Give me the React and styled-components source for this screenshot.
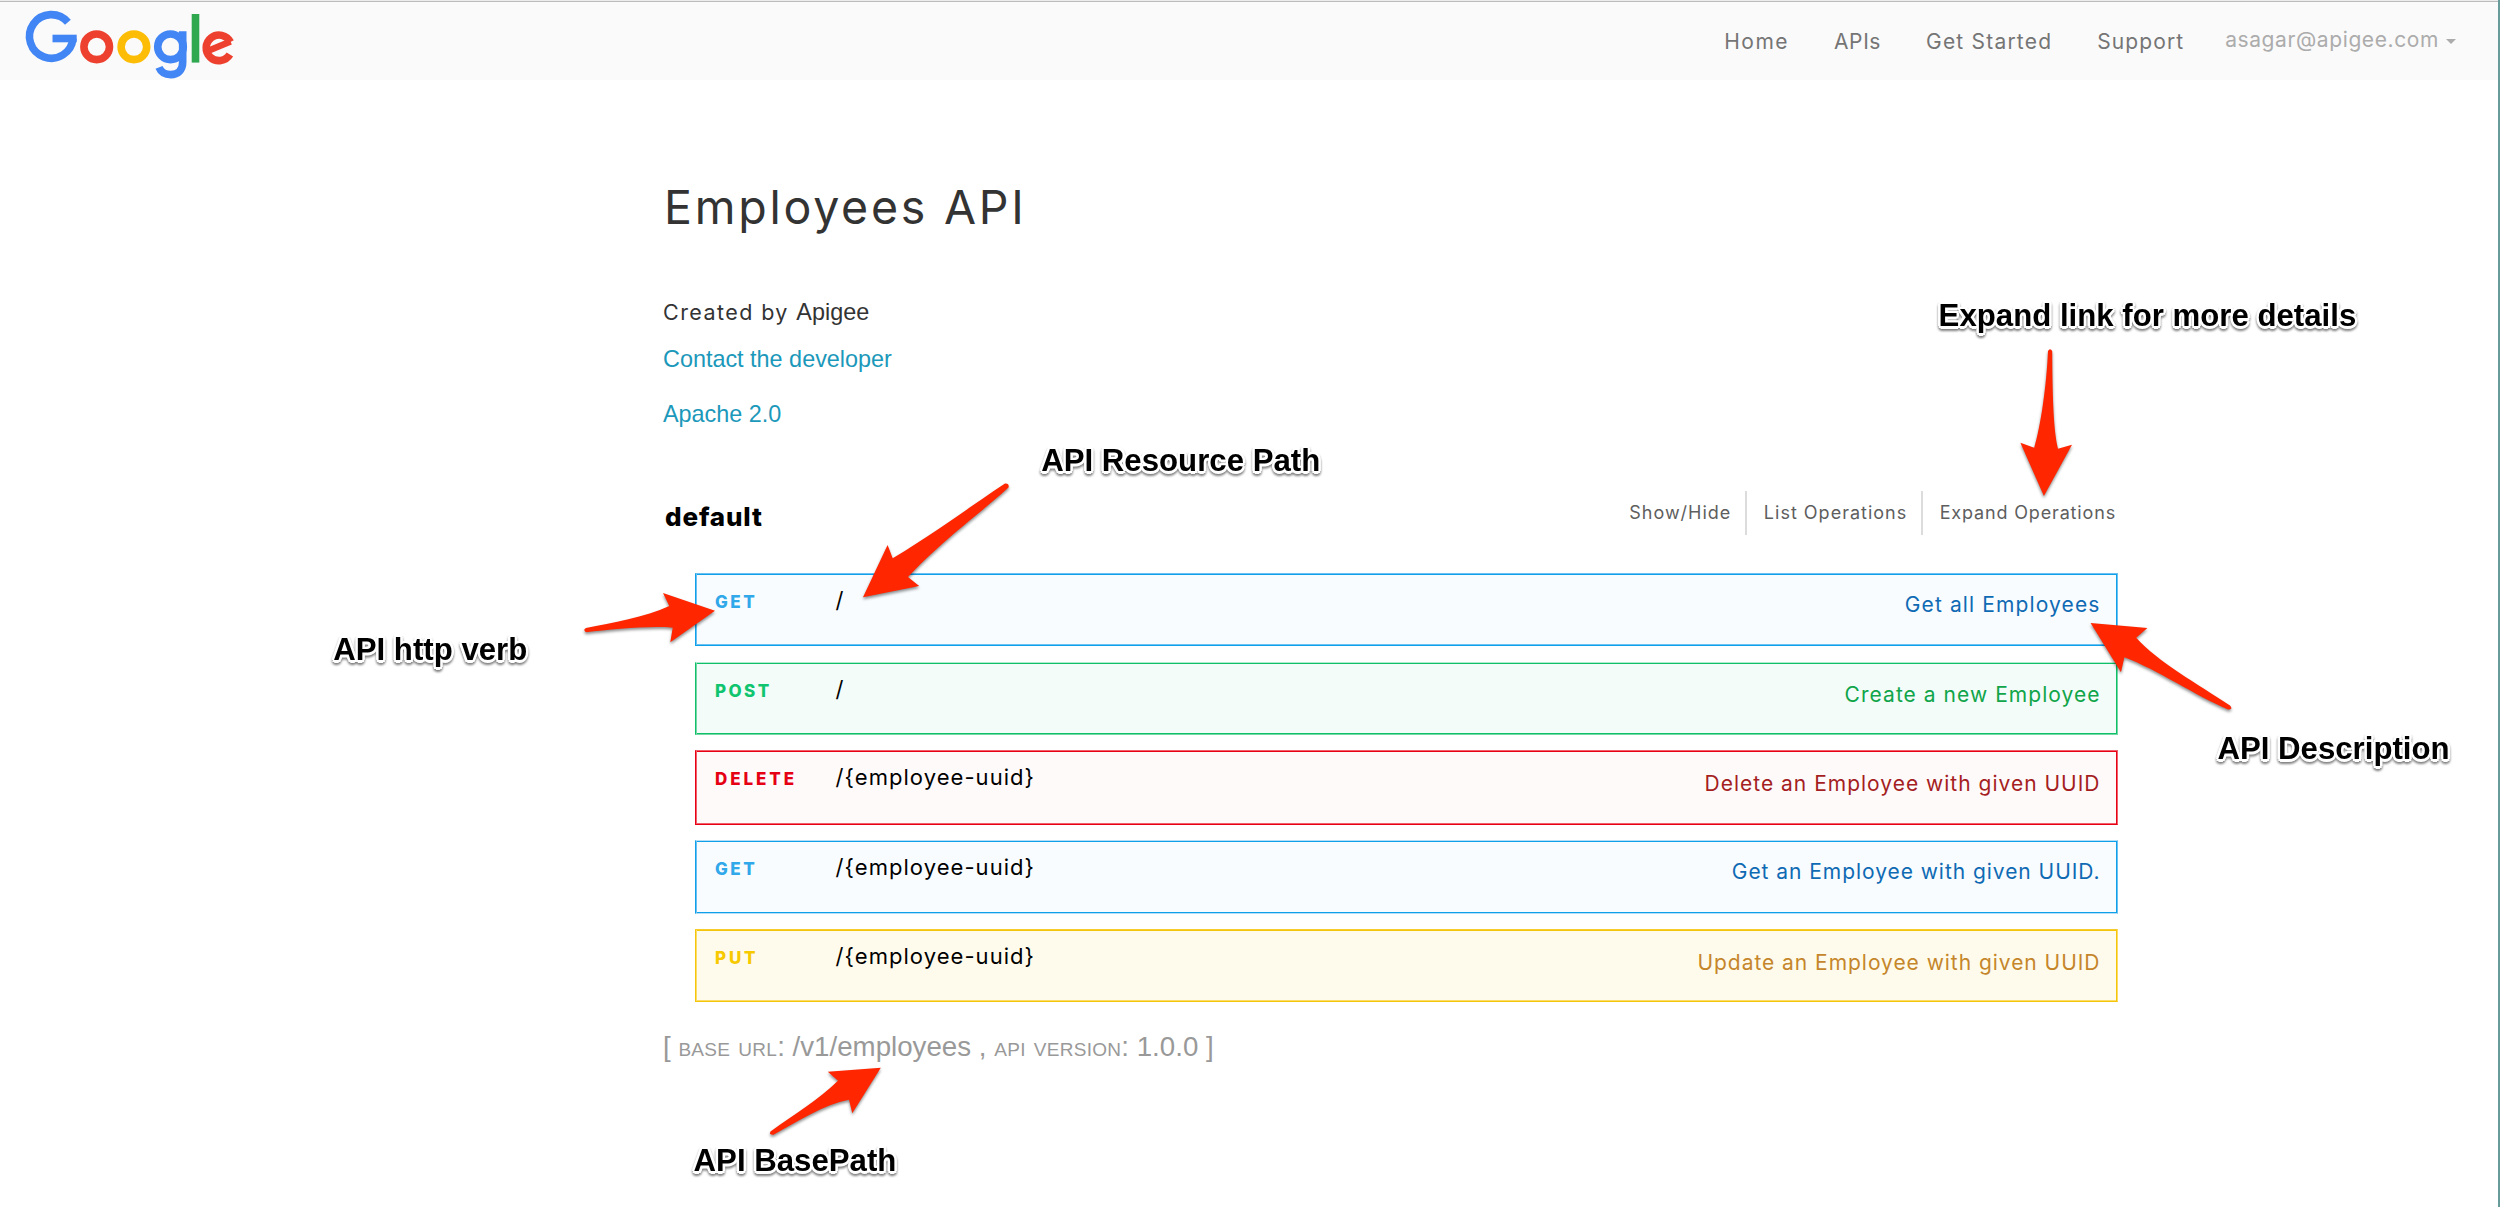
import React from "react";
import styled, { createGlobalStyle } from "styled-components";

const sans = `Inter, "Open Sans", sans-serif`;
const helvetica = `"Liberation Sans", Arial, sans-serif`;

const Global = createGlobalStyle`
  * { box-sizing: border-box; }
  body { margin: 0; background: #fff; font-family: ${sans}; }
`;

const Page = styled.div`
  position: relative;
  width: 2500px;
  height: 1207px;
  border-right: 2px solid #679c9b;
  background: #fff;
  overflow: hidden;
`;

const Header = styled.header`
  display: flex;
  justify-content: space-between;
  align-items: flex-start;
  height: 80px;
  border-top: 1px solid #ececec;
  box-shadow: inset 0 1px #bcbcbc;
  background: #fafafa;
`;

const Logo = styled.svg`
  display: block;
  width: 240px;
  height: 79px;
  fill: none;
  stroke-width: 7.6;
`;

const Nav = styled.nav`
  display: flex;
  gap: 45px;
  padding: 29px 42px 0 0;
`;

const NavLink = styled.a`
  font-size: 21px;
  line-height: 24px;
  letter-spacing: ${(p) => p.$track}px;
  color: #757575;
  white-space: nowrap;
`;

const UserMenu = styled(NavLink)`
  display: flex;
  gap: 7px;
  margin: -2px 0 0 -4.1px;
  color: #acacac;
`;

const Caret = styled.span`
  width: 10px;
  height: 5px;
  margin-top: 11px;
  background: #acacac;
  clip-path: polygon(0 0, 100% 0, 50% 100%);
`;

const Main = styled.main`
  width: 1455px;
  margin-left: 663px;
  padding-top: 99px;
`;

const Title = styled.h1`
  margin: 0;
  padding-left: 1px;
  font-size: 46.5px;
  font-weight: 400;
  line-height: 56px;
  letter-spacing: 2.75px;
  color: #333;
`;

const Author = styled.p`
  display: flex;
  align-items: baseline;
  gap: 7.5px;
  height: 30px;
  margin: 61.5px 0 17px;
  font-size: 21.5px;
  line-height: 30px;
  letter-spacing: 1.42px;
  color: #333;
`;

const AuthorName = styled.span`
  font-family: ${helvetica};
  font-size: 23.4px;
  letter-spacing: 0;
`;

const InfoLink = styled.a`
  display: block;
  margin-bottom: 25.5px;
  font-family: ${helvetica};
  font-size: 23.4px;
  line-height: 30px;
  color: #1b98ba;
`;

const ResourceBar = styled.div`
  display: flex;
  justify-content: space-between;
  height: 44px;
  margin: 62px 0 38px;
`;

const ResourceName = styled.h2`
  margin: 0;
  padding: 11.2px 0 0 2px;
  font-size: 26px;
  font-weight: 800;
  line-height: 30px;
  letter-spacing: 0.85px;
  color: #000;
`;

const Options = styled.div`
  display: flex;
  padding-right: 2px;
`;

const Option = styled.a`
  padding: 12px 14px 0 16.5px;
  border-right: 2px solid #dcdcdc;
  font-size: 18px;
  line-height: 20px;
  letter-spacing: 1px;
  color: #5e5e5e;
  white-space: nowrap;
  &:last-child {
    padding-right: 0;
    border-right: 0;
    letter-spacing: 0.84px;
  }
`;

const Operations = styled.div`
  display: flex;
  flex-direction: column;
  gap: 15px;
  padding-left: 32px;
`;

const palette = {
  get: { line: "#10a0e9", soft: "#6ac0f0", pale: "#b5def7", bg: "#f8fcff", verb: "#30a8ea", text: "#0f6ab4" },
  post: { line: "#10c068", soft: "#74d8a5", pale: "#b0ead0", bg: "#f3fcf9", verb: "#10c56f", text: "#10a54a" },
  delete: { line: "#e80013", soft: "#f0606c", pale: "#f0606c", bg: "#fffafa", verb: "#e50014", text: "#a41e22" },
  put: { line: "#f5c50c", soft: "#fbdc66", pale: "#f7cd2c", bg: "#fffbec", verb: "#f7c900", text: "#c5862b" },
};

const Operation = styled.div`
  display: flex;
  align-items: flex-start;
  height: ${(p) => p.$height}px;
  padding: 0 16.5px 0 19px;
  border: 1px solid;
  border-color: ${({ $c, $top, $bottom }) => `${$c[$top]} ${$c.soft} ${$c[$bottom]} ${$c.line}`};
  box-shadow: inset 1px 0 ${(p) => p.$c.soft}, inset -1px 0 ${(p) => p.$c.line},
    inset 0 1px ${(p) => p.$c.line},
    inset 0 -1px ${(p) => (p.$bottom === "line" ? p.$c.soft : p.$c.line)};
  background: ${(p) => p.$c.bg};
  &:first-child { margin-bottom: 1px; }
`;

const Verb = styled.span`
  width: 120.6px;
  padding-top: 17.5px;
  font-size: 17px;
  font-weight: 800;
  line-height: 20px;
  letter-spacing: ${(p) => p.$track}px;
  color: ${(p) => p.$c.verb};
`;

const Path = styled.span`
  padding-top: 13px;
  font-size: 22px;
  font-weight: 400;
  line-height: 26px;
  letter-spacing: 1.05px;
  color: #000;
`;

const Description = styled.span`
  margin-left: auto;
  padding-top: ${(p) => p.$top}px;
  font-size: 21px;
  font-weight: 400;
  line-height: 26px;
  letter-spacing: ${(p) => p.$track}px;
  color: ${(p) => p.$c.text};
`;

const Footer = styled.footer`
  margin-top: 28px;
  font-family: ${helvetica};
  font-size: 27.7px;
  line-height: 34px;
  color: #999;
`;

const SmallCaps = styled.span`
  font-variant: small-caps;
  letter-spacing: 0.3px;
`;

const Arrows = styled.svg`
  position: absolute;
  left: 0;
  top: 0;
  width: 2498px;
  height: 1207px;
  fill: #ff2600;
  filter: drop-shadow(0 2px 1.5px rgba(0, 0, 0, 0.45));
  pointer-events: none;
`;

const Note = styled.span`
  position: absolute;
  left: ${(p) => p.$x}px;
  top: ${(p) => p.$y}px;
  font-family: ${helvetica};
  font-size: 31.2px;
  font-weight: 700;
  line-height: 36px;
  color: #000;
  white-space: nowrap;
  text-shadow: 2.5px 0 #fff, -2.5px 0 #fff, 0 2.5px #fff, 0 -2.5px #fff,
    1.8px 1.8px #fff, -1.8px 1.8px #fff, 1.8px -1.8px #fff, -1.8px -1.8px #fff;
  filter: drop-shadow(0 2px 1.2px rgba(0, 0, 0, 0.5));
`;

const operations = [
  { verb: "get", path: "/", text: "Get all Employees", height: 73, top: "soft", bottom: "line", pad: 17.6, track: 1.12, verbTrack: 2.5 },
  { verb: "post", path: "/", text: "Create a new Employee", height: 73, top: "pale", bottom: "soft", pad: 19, track: 1.04, verbTrack: 2.4 },
  { verb: "delete", path: "/{employee-uuid}", text: "Delete an Employee with given UUID", height: 75, top: "soft", bottom: "line", pad: 19.5, track: 1, verbTrack: 2.9 },
  { verb: "get", path: "/{employee-uuid}", text: "Get an Employee with given UUID.", height: 74, top: "pale", bottom: "pale", pad: 18.2, track: 0.95, verbTrack: 2.5 },
  { verb: "put", path: "/{employee-uuid}", text: "Update an Employee with given UUID", height: 73, top: "pale", bottom: "line", pad: 19.5, track: 0.96, verbTrack: 2.8 },
];

const notes = [
  { text: "Expand link for more details", x: 1938.6, y: 298.3 },
  { text: "API Resource Path", x: 1041.2, y: 443.3 },
  { text: "API http verb", x: 333.2, y: 632.2 },
  { text: "API Description", x: 2217.4, y: 731.2 },
  { text: "API BasePath", x: 693.6, y: 1143.2 },
];

export default function App() {
  return (
    <Page>
      <Global />
      <Header>
        <Logo viewBox="0 1 240 79" role="img" aria-label="Google">
          <path stroke="#4285f4" d="M67.9 22.3A21.8 21.8 0 1 0 73 38.5" />
          <path stroke="#4285f4" d="M52.5 38.5H76.7" />
          <circle stroke="#ee402e" cx="96.7" cy="46.8" r="12.8" />
          <circle stroke="#fdbd06" cx="133.9" cy="46.8" r="12.8" />
          <circle stroke="#4285f4" cx="170.5" cy="46.8" r="12.8" />
          <path stroke="#4285f4" d="M182.7 31.2V62C182.7 70 178 74.6 170.8 74.6C165 74.6 160.8 71.8 159 67.4" />
          <path stroke="#2fa84f" d="M195.5 14V62.6" />
          <path stroke="#ee402e" strokeWidth="6.4" d="M209.5 50.2L230.6 41.5" />
          <path stroke="#ee402e" d="M230.4 42A12.8 12.8 0 1 0 229.9 54.6" />
        </Logo>
        <Nav>
          <NavLink $track={1.5}>Home</NavLink>
          <NavLink $track={0.6}>APIs</NavLink>
          <NavLink $track={1.2}>Get Started</NavLink>
          <NavLink $track={1.1}>Support</NavLink>
          <UserMenu $track={0.6}>
            asagar@apigee.com
            <Caret />
          </UserMenu>
        </Nav>
      </Header>

      <Main>
        <Title>Employees API</Title>
        <Author>
          Created by <AuthorName>Apigee</AuthorName>
        </Author>
        <InfoLink>Contact the developer</InfoLink>
        <InfoLink>Apache 2.0</InfoLink>

        <ResourceBar>
          <ResourceName>default</ResourceName>
          <Options>
            <Option>Show/Hide</Option>
            <Option>List Operations</Option>
            <Option>Expand Operations</Option>
          </Options>
        </ResourceBar>

        <Operations>
          {operations.map((op, i) => {
            const c = palette[op.verb];
            return (
              <Operation key={i} $c={c} $height={op.height} $top={op.top} $bottom={op.bottom}>
                <Verb $c={c} $track={op.verbTrack}>{op.verb.toUpperCase()}</Verb>
                <Path>{op.path}</Path>
                <Description $c={c} $top={op.pad} $track={op.track}>
                  {op.text}
                </Description>
              </Operation>
            );
          })}
        </Operations>

        <Footer>
          [ <SmallCaps>base url</SmallCaps>: /v1/employees , <SmallCaps>api version</SmallCaps>: 1.0.0 ]
        </Footer>
      </Main>

      <Arrows viewBox="0 0 2498 1207">
        <path d="M2048 351Q2050 347.500 2052.200 351C2052.500 390 2053 428 2058 448.700L2072 444.700L2043.900 496L2020.400 442.700L2034.200 447.700C2041 425 2046.500 385 2048 351Z" />
        <path d="M1005 483.500Q1009.500 483 1008.500 487.500C976 517 945 538 908 577L919.200 586L863 597.300L887.600 545L892.700 558.300C935 533 968 508 1005 483.500Z" />
        <path d="M586 628C612 623 645 617 669.300 606L663 593L715 610.700L670.300 642.300L672.700 627.700C648 625.500 612 629.500 586 632.200Q582.500 630 586 628Z" />
        <path d="M2090.600 623L2147.400 628L2136.200 637.700C2158 662 2198 684 2230 705.500Q2233.500 709.500 2228 709.500C2196 696 2158 670 2124.400 657.300L2121 672.300Z" />
        <path d="M770.500 1131.500C796 1113 818 1100 838 1080.700L827.800 1071.700L880.800 1067.700L852.300 1113.300L849 1099.700C824 1104.500 798 1121 773.500 1134.800Q768.500 1135 770.500 1131.500Z" />
      </Arrows>
      {notes.map((n) => (
        <Note key={n.text} $x={n.x} $y={n.y}>
          {n.text}
        </Note>
      ))}
    </Page>
  );
}
